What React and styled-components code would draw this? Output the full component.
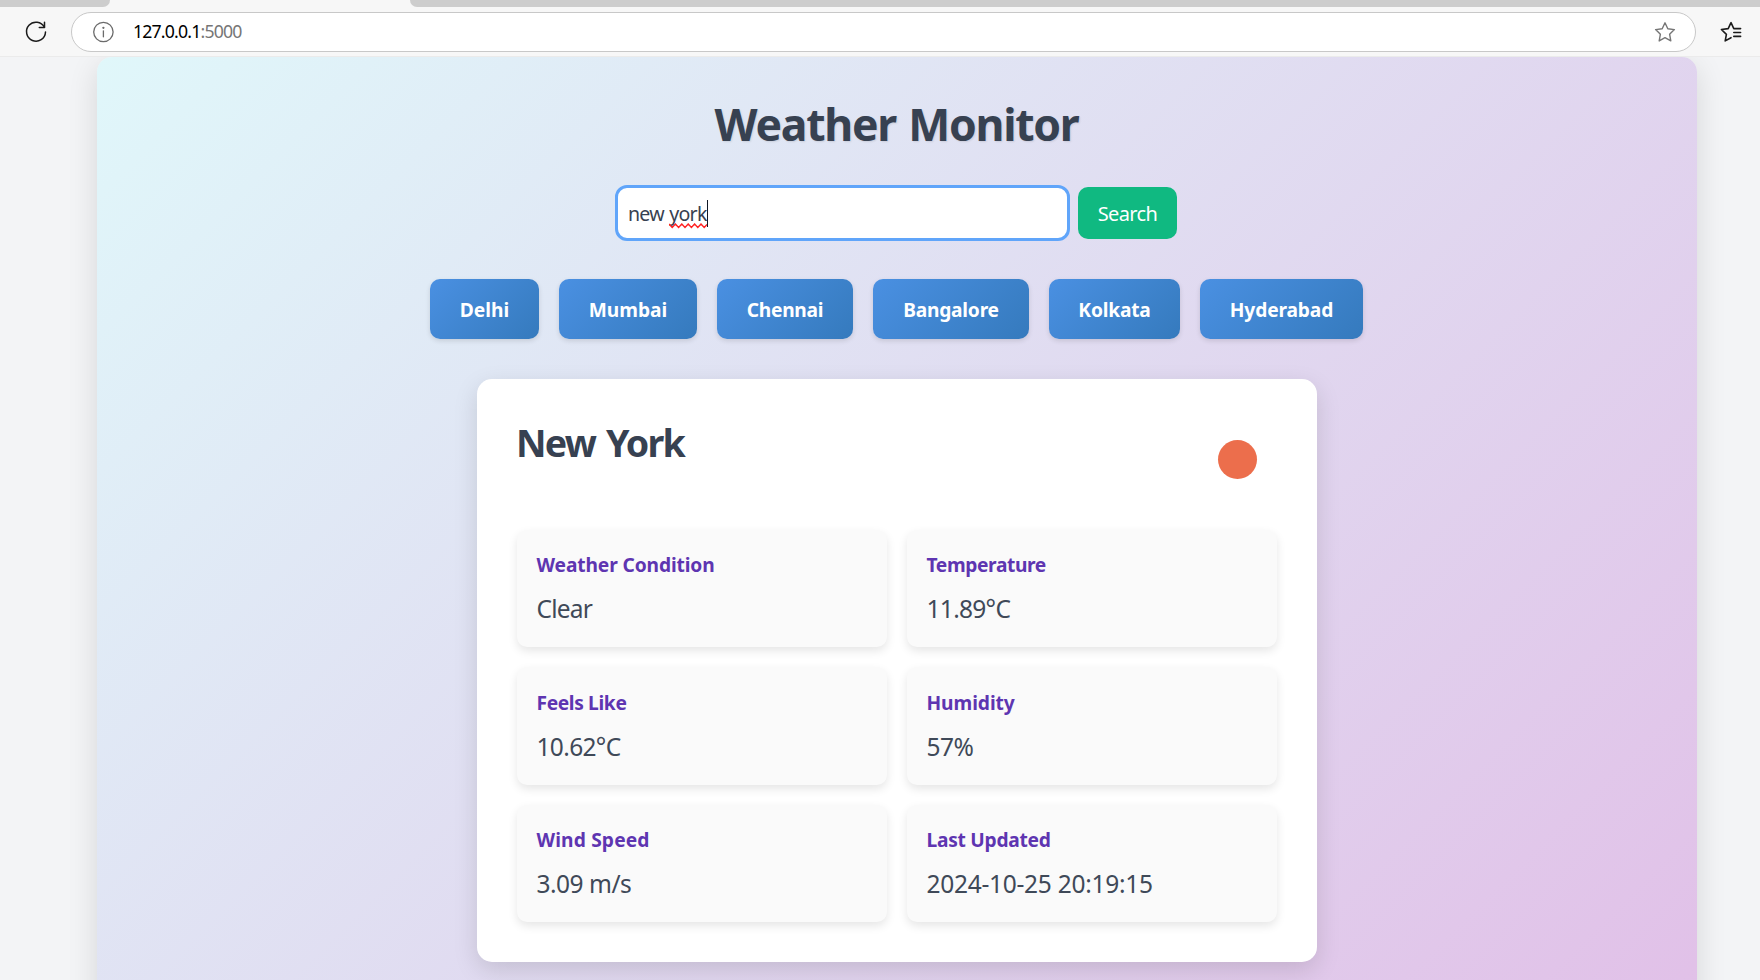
import React from "react";
import styled, { createGlobalStyle } from "styled-components";

const Global = createGlobalStyle`
  * { box-sizing: border-box; }
  body {
    margin: 0;
    overflow: hidden;
    background: #f3f4f6;
    color: #374151;
    font-family: "Segoe UI", "Noto Sans", "Open Sans", sans-serif;
  }
`;

const Window = styled.div`
  display: flex;
  flex-direction: column;
  width: 1760px;
  height: 980px;
  overflow: hidden;
`;

const TabStrip = styled.div`
  display: flex;
  justify-content: space-between;
  flex: none;
  height: 7px;
  background: #f7f7f7;
`;

const InactiveTabs = styled.div`
  width: ${(p) => p.$width}px;
  background: #cdcdcd;
  border-radius: ${(p) => (p.$side === "left" ? "0 0 12px 0" : "0 0 0 12px")};
`;

const Toolbar = styled.div`
  display: flex;
  align-items: center;
  flex: none;
  height: 50px;
  padding: 0 17px 0 24px;
  background: #f7f7f7;
  border-bottom: 1px solid #ebebeb;
`;

const AddressBar = styled.div`
  display: flex;
  align-items: center;
  flex: none;
  width: 1625px;
  height: 40px;
  margin: 0 23px;
  padding: 0 18px 0 19px;
  background: #fff;
  border: 1px solid #c8c8c8;
  border-radius: 20px;
`;

const Url = styled.div`
  flex: 1;
  margin: 0 0 1px 18px;
  font-size: 17.7px;
  line-height: 24px;
  letter-spacing: -0.83px;
  color: #000;
`;

const Port = styled.span`
  color: #767676;
`;

const Viewport = styled.div`
  flex: 1;
  min-height: 0;
  overflow: hidden;
`;

const Container = styled.main`
  display: flex;
  flex-direction: column;
  align-items: center;
  width: 1600px;
  height: 1045px;
  margin-left: 97px;
  padding: 40px;
  border-radius: 15px;
  background: linear-gradient(135deg, #e0f7fa, #e1bee7);
  box-shadow: 0 8px 30px rgba(0, 0, 0, 0.12);
`;

const Title = styled.h1`
  margin: 0 1px 0 0;
  font-size: 44.5px;
  font-weight: 700;
  line-height: 54px;
  letter-spacing: -1.25px;
  word-spacing: 2px;
  text-shadow: 1px 1px 2px rgba(0, 0, 0, 0.1);
`;

const SearchRow = styled.form`
  display: flex;
  align-items: center;
  gap: 8px;
  height: 58px;
  margin: 33px 2px 37px 0;
`;

const SearchField = styled.div`
  display: flex;
  align-items: center;
  width: 455px;
  height: 56px;
  padding: 0 10px;
  background: #fff;
  border: 3px solid #60a5fa;
  border-radius: 12px;
  font-size: 19.6px;
  line-height: 27px;
  letter-spacing: -0.75px;
  word-spacing: 1px;
  white-space: pre;
`;

const Misspelled = styled.span`
  position: relative;
  letter-spacing: -0.75px;
`;

const Squiggle = styled.svg`
  position: absolute;
  left: 0;
  bottom: -2px;
`;

const Caret = styled.span`
  width: 1px;
  height: 27px;
  background: #111827;
`;

const SearchButton = styled.button`
  width: 99px;
  height: 52px;
  padding: 0;
  border: 0;
  border-radius: 10px;
  background: #10b981;
  color: #fff;
  font: 400 20px/27px "Segoe UI", "Noto Sans", "Open Sans", sans-serif;
  letter-spacing: -0.6px;
`;

const Cities = styled.nav`
  display: flex;
  gap: 20px;
  margin-right: 1px;
`;

const CityButton = styled.button`
  width: ${(p) => p.$width}px;
  height: 60px;
  padding: 0;
  border: 0;
  border-radius: 10px;
  background: linear-gradient(135deg, #4a90e2, #357abd);
  box-shadow: 0 2px 5px rgba(0, 0, 0, 0.12);
  color: #fff;
  font: 700 19.2px/27px "Segoe UI", "Noto Sans", "Open Sans", sans-serif;
  letter-spacing: ${(p) => p.$track}px;
`;

const Card = styled.section`
  width: 840px;
  height: 583px;
  margin-top: 40px;
  padding: 40px;
  border-radius: 15px;
  background: #fff;
  box-shadow: 0 8px 24px rgba(0, 0, 0, 0.13);
`;

const CardHeader = styled.header`
  display: flex;
  justify-content: space-between;
  height: 110.5px;
`;

const CityName = styled.h2`
  margin: 0 0 0 -1px;
  font-size: 37.6px;
  font-weight: 700;
  line-height: 47px;
  letter-spacing: -1.8px;
  word-spacing: 3px;
`;

const WeatherIcon = styled.svg`
  width: 80px;
  height: 80px;
`;

const Grid = styled.div`
  display: grid;
  grid-template-columns: 1fr 1fr;
  grid-auto-rows: 117.5px;
  gap: 20px;
`;

const Metric = styled.div`
  padding: 19.7px 19.5px;
  border-radius: 10px;
  background: #fafafa;
  box-shadow: 0 4px 10px rgba(0, 0, 0, 0.1);
`;

const Label = styled.h3`
  margin: 0 0 12px;
  font-size: 19.2px;
  font-weight: 700;
  line-height: 31px;
  letter-spacing: ${(p) => p.$track}px;
  color: #5e35b1;
`;

const Value = styled.p`
  margin: 0;
  font-size: 24.5px;
  line-height: 34px;
  letter-spacing: ${(p) => p.$track}px;
  color: #3f4958;
`;

const Icon = ({ children, color = "#1b1b1b", width = 1.5, size = 24 }) => (
  <svg width={size} height={size} viewBox="0 0 24 24" fill="none" stroke={color}
    strokeWidth={width} strokeLinecap="round" strokeLinejoin="round">{children}</svg>
);

const ReloadIcon = () => (
  <Icon width={1.5}>
    <path d="M20.4 7.2A9.5 9.5 0 1 0 21.5 12" />
    <path d="M20.5 2.2v5.2h-5.2" />
  </Icon>
);

const InfoIcon = () => (
  <Icon color="#6b6b6b" width={1.3}>
    <circle cx="12.4" cy="12" r="9.7" />
    <path d="M12.4 10.8v6" />
    <circle cx="12.4" cy="7.8" r="0.5" fill="#6b6b6b" />
  </Icon>
);

const StarIcon = () => (
  <Icon color="#767676" width={1.4}>
    <path d="M12 2.8l2.8 6 6.6.8-4.8 4.6 1.2 6.7-5.8-3.2-5.8 3.2 1.2-6.7-4.8-4.6 6.6-.8z" />
  </Icon>
);

const FavoritesIcon = () => (
  <Icon width={1.6}>
    <path d="M21.6 8.6h-6.8L12 2.7 9.2 8.6l-6.8.9 5 4.8-1.2 6.6 5.8-3.2" />
    <path d="M14.8 12.5h6.8M14.8 16.4h6.8" />
  </Icon>
);

const cities = [
  ["Delhi", 109, 0], ["Mumbai", 138, 0], ["Chennai", 136, -0.28],
  ["Bangalore", 156, -0.22], ["Kolkata", 131, -0.2], ["Hyderabad", 163, -0.15],
];

const metrics = [
  ["Weather Condition", -0.12, "Clear", -0.75],
  ["Temperature", -0.38, "11.89°C", -0.7],
  ["Feels Like", -0.36, "10.62°C", -0.65],
  ["Humidity", -0.06, "57%", -0.5],
  ["Wind Speed", 0.15, "3.09 m/s", -0.5],
  ["Last Updated", -0.27, "2024-10-25 20:19:15", -0.28],
];

export default function App() {
  return (
    <Window>
      <Global />
      <TabStrip>
        <InactiveTabs $side="left" $width={110} />
        <InactiveTabs $side="right" $width={1350} />
      </TabStrip>
      <Toolbar>
        <ReloadIcon />
        <AddressBar>
          <InfoIcon />
          <Url>127.0.0.1<Port>:5000</Port></Url>
          <StarIcon />
        </AddressBar>
        <FavoritesIcon />
      </Toolbar>
      <Viewport>
        <Container>
          <Title>Weather Monitor</Title>
          <SearchRow>
            <SearchField>
              <span>new </span>
              <Misspelled>
                york
                <Squiggle width="38" height="6" viewBox="0 0 38 6" fill="none" stroke="#f22" strokeWidth="1.4">
                  <path d="M0 1l3.2 3.5L6.4 1l3.2 3.5L12.8 1l3.2 3.5L19.2 1l3.2 3.5L25.6 1l3.2 3.5L32 1l3.2 3.5L38 1.5" />
                </Squiggle>
              </Misspelled>
              <Caret />
            </SearchField>
            <SearchButton type="button">Search</SearchButton>
          </SearchRow>
          <Cities>
            {cities.map(([name, width, track]) => (
              <CityButton key={name} $width={width} $track={track}>{name}</CityButton>
            ))}
          </Cities>
          <Card>
            <CardHeader>
              <CityName>New York</CityName>
              <WeatherIcon viewBox="0 0 80 80">
                <circle cx="40.5" cy="40.5" r="19.5" fill="#ec6e4c" />
              </WeatherIcon>
            </CardHeader>
            <Grid>
              {metrics.map(([label, track, value, valueTrack]) => (
                <Metric key={label}>
                  <Label $track={track}>{label}</Label>
                  <Value $track={valueTrack}>{value}</Value>
                </Metric>
              ))}
            </Grid>
          </Card>
        </Container>
      </Viewport>
    </Window>
  );
}
